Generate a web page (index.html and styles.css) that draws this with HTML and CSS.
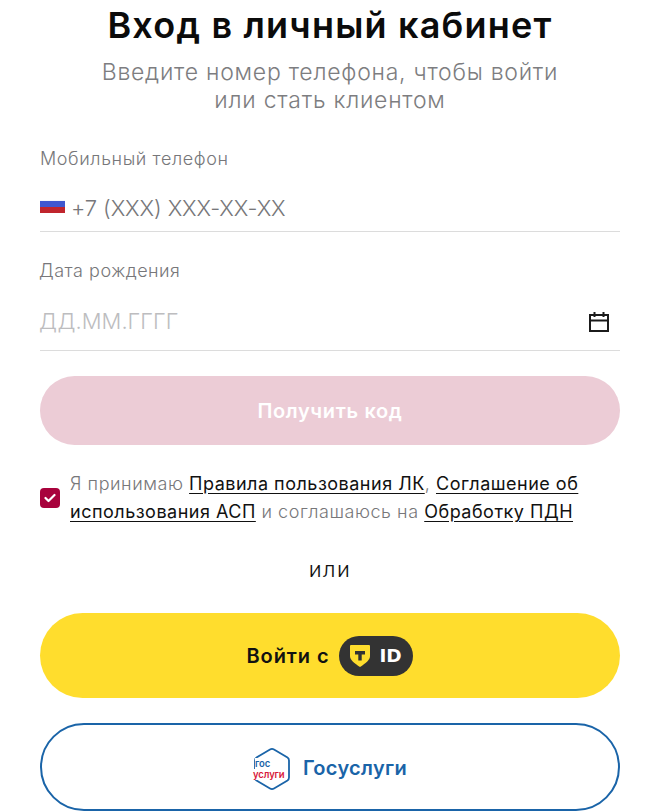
FILE: index.html
```html
<!DOCTYPE html>
<html lang="ru">
<head>
<meta charset="utf-8">
<title>Вход в личный кабинет</title>
<link rel="stylesheet" href="styles.css">
</head>
<body>
<main class="page">
  <h1 class="title">Вход в личный кабинет</h1>
  <p class="subtitle">Введите номер телефона, чтобы войти<br>или стать клиентом</p>

  <div class="field field-phone">
    <div class="label">Мобильный телефон</div>
    <div class="control">
      <svg class="flag" width="25" height="13" viewBox="0 0 25 13"><rect width="25" height="4" fill="#f4f6fb"/><rect y="1" width="25" height="6" fill="#3f57cf"/><rect y="7" width="25" height="6" fill="#c0252d"/></svg>
      <span class="value">+7 (XXX) XXX-XX-XX</span>
    </div>
  </div>

  <div class="field field-date">
    <div class="label label-date">Дата рождения</div>
    <div class="control control-date">
      <span class="placeholder">ДД.ММ.ГГГГ</span>
      <svg class="calendar" width="22" height="22" viewBox="0 0 22 22" fill="none" stroke="#1b1b1b" stroke-width="2"><rect x="2" y="4" width="18" height="16"/><path d="M2 9.500h18M6.500 1v5M15.500 1v5"/></svg>
    </div>
  </div>

  <button class="btn btn-code" type="button">Получить код</button>

  <div class="consent">
    <span class="check"><svg width="12" height="10" viewBox="0 0 12 10" fill="none" stroke="#fff" stroke-width="2.200" stroke-linecap="round" stroke-linejoin="round"><path d="M1.500 5l3 3 6-6"/></svg></span>
    <p class="consent-text">Я принимаю <a href="#">Правила пользования ЛК</a>, <a href="#">Соглашение об</a><br><a href="#">использования АСП</a> и соглашаюсь на <a href="#">Обработку ПДН</a></p>
  </div>

  <div class="or">или</div>

  <button class="btn btn-tid" type="button">
    <span>Войти с</span>
    <span class="tid">
      <svg width="20" height="22" viewBox="0 0 20 22"><path d="M1 0h18a1 1 0 0 1 1 1v10c0 4-4.500 7.500-10 11C4.500 18.500 0 15 0 11V1a1 1 0 0 1 1-1z" fill="#ffdd2d"/><path d="M5 6h10v3.500h-3.300v6H8.300v-6H5z" fill="#333"/></svg>
      <span class="tid-text">ID</span>
    </span>
  </button>

  <button class="btn btn-gos" type="button">
    <span class="gos-logo">
      <svg class="hex" width="38" height="44" viewBox="0 0 38 44" fill="none"><path d="M17 2.500Q19 1.300 21 2.500L34.500 10.500Q36 11.500 36 13.500V30.500Q36 32.500 34.500 33.500L21 41.500Q19 42.700 17 41.500L3.500 33.500Q2 32.500 2 30.500V13.500Q2 11.500 3.500 10.500Z" stroke="#1a64a8" stroke-width="1.800"/></svg>
      <span class="gos-inner"><span class="gos-top">гос</span><span class="gos-bottom">услуги</span></span>
    </span>
    <span>Госуслуги</span>
  </button>
</main>
</body>
</html>
```

FILE: styles.css
```css
* { box-sizing: border-box; }
html, body { margin: 0; background: #fff; }
body { font-family: "Inter", "Liberation Sans", sans-serif; overflow: hidden; height: 811px; }
.page { padding: 0 28px 0 40px; width: 648px; display: flex; flex-direction: column; }
.title { margin: 3px 0 0; font-size: 36px; line-height: 44px; font-weight: 600; text-align: center; color: #0b0b0b; letter-spacing: 1.2px; }
.subtitle { margin: 11px 0 0; font-size: 23px; line-height: 28px; font-weight: 300; text-align: center; color: #7d7d80; letter-spacing: .75px; }
.field { display: flex; flex-direction: column; }
.field-phone { margin-top: 33px; }
.field-date { margin-top: 27px; }
.label { font-size: 18px; line-height: 24px; font-weight: 300; color: #77777a; letter-spacing: .6px; }
.label-date { letter-spacing: .5px; margin-left: -1px; }
.control { display: flex; align-items: center; border-bottom: 1px solid #dcdcdc; }
.field-phone .control { height: 61px; padding-top: 13px; }
.field-date .control { height: 68px; padding-top: 8px; }
.flag { margin-right: 6px; flex: none; margin-bottom: 3px; }
.value { font-size: 22px; font-weight: 300; color: #77777a; letter-spacing: -.1px; }
.control-date { justify-content: space-between; padding-right: 10px; }
.placeholder { font-size: 22px; font-weight: 300; color: #bdbdbf; margin-left: -1px; }
.calendar { flex: none; margin-top: 3px; }
.btn { display: flex; align-items: center; justify-content: center; width: 100%; border: 0; font-family: inherit; }
.btn-code { margin-top: 25px; height: 69px; border-radius: 35px; background: #ecccd6; color: #fff; font-size: 20px; font-weight: 600; letter-spacing: .65px; }
.consent { display: flex; align-items: center; gap: 10px; margin-top: 25px; }
.check { display: flex; align-items: center; justify-content: center; flex: none; width: 20px; height: 20px; border-radius: 4px; background: #a8023c; }
.consent-text { margin: 0; font-size: 18px; line-height: 28px; font-weight: 300; color: #77777a; letter-spacing: .55px; }
.consent-text a { color: #111; font-weight: 400; letter-spacing: .5px; text-decoration: underline; text-underline-offset: 3px; }
.or { margin-top: 29px; text-align: center; font-size: 22px; line-height: 28px; font-weight: 300; color: #111; letter-spacing: 1.500px; }
.btn-tid { margin-top: 30px; height: 85px; border-radius: 43px; background: #ffdd2d; color: #111; font-size: 20px; font-weight: 600; letter-spacing: .9px; gap: 10px; }
.tid { display: flex; align-items: center; gap: 9px; height: 40px; width: 74px; padding-left: 11px; border-radius: 20px; background: #333; }
.tid-text { color: #fff; font-family: "DejaVu Sans", sans-serif; font-size: 18.500px; font-weight: 700; letter-spacing: 0; }
.btn-gos { margin-top: 25px; height: 88px; border-radius: 44px; background: #fff; border: 2px solid #1a64a8; color: #1a64a8; font-size: 20px; font-weight: 600; letter-spacing: .3px; gap: 12px; padding-top: 2px; }
.gos-logo { position: relative; display: block; width: 38px; height: 44px; margin-top: 2px; }
.hex { display: block; }
.gos-inner { position: absolute; inset: 0; display: flex; flex-direction: column; align-items: flex-start; justify-content: center; font-size: 9.500px; line-height: 11px; font-weight: 600; letter-spacing: 0; }
.gos-top { color: #1a64a8; margin-left: 2px; background: #fff; }
.gos-bottom { color: #d8193a; letter-spacing: -.1px; background: #fff; }
```
